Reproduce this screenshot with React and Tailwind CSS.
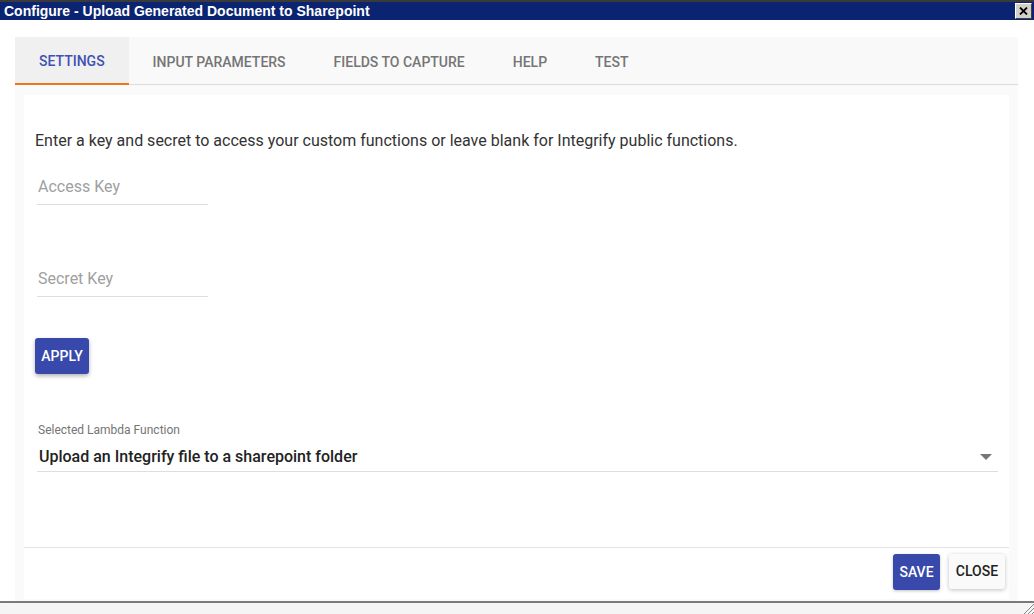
import React from 'react'

const tabs = ['SETTINGS', 'INPUT PARAMETERS', 'FIELDS TO CAPTURE', 'HELP', 'TEST']

const App = () => {
    return (
        <div className="flex flex-col h-[614px] w-[1034px] bg-white overflow-hidden" style={{ fontFamily: 'Roboto, "Liberation Sans", sans-serif' }}>
            {/* title bar */}
            <div className="flex items-center justify-between h-[22px] border-t-2 border-[#3a3a3a] bg-[#0a2472] pl-[4px] pr-[2px]">
                <span className="text-[14px] font-bold text-white leading-none" style={{ fontFamily: '"Liberation Sans", Arial, sans-serif' }}>
                    Configure - Upload Generated Document to Sharepoint
                </span>
                <div className="flex items-center justify-center h-[16px] w-[17px] bg-[#d4d0c8] border border-t-white border-l-white border-r-[#404040] border-b-[#404040]">
                    <svg width="9" height="8" viewBox="0 0 9 8">
                        <path d="M1 0.5 L8 7.5 M8 0.5 L1 7.5" stroke="#000" strokeWidth="1.8" />
                    </svg>
                </div>
            </div>

            <div className="flex-1 flex flex-col pt-[17px] px-[15px] pr-[16px]">
                {/* tabs */}
                <div className="flex h-[48px] bg-[#f9f9f9] border-b border-[#dcdcdc]">
                    {tabs.map((t, i) => (
                        <div
                            key={t}
                            className={
                                i === 0
                                    ? 'flex items-center pt-[3px] px-[24px] text-[14px] font-medium text-[#3f51b5] bg-[#f0f0f0] border-b-2 border-[#e87722] -mb-px'
                                    : 'flex items-center pt-[3px] px-[24px] text-[14px] font-medium text-[#757575]'
                            }
                        >
                            {t}
                        </div>
                    ))}
                </div>

                {/* body */}
                <div className="flex-1 flex flex-col bg-[#fafafa] px-[9px] pt-[10px] pb-[2px]">
                    <div className="flex flex-col h-[453px] bg-white border-b border-[#e2e2e2] px-[11px] pt-[36px]">
                        <p className="text-[16px] text-[#333] leading-[20px]">
                            Enter a key and secret to access your custom functions or leave blank for Integrify public functions.
                        </p>

                        <div className="mt-[24px] ml-[2px] w-[171px] border-b border-[#dedede] pb-[5px]">
                            <span className="pl-[1px] text-[16px] text-[#a0a0a0] leading-[20px]">Access Key</span>
                        </div>

                        <div className="mt-[62px] ml-[2px] w-[171px] border-b border-[#dedede] pb-[5px]">
                            <span className="pl-[1px] text-[16px] text-[#a0a0a0] leading-[20px]">Secret Key</span>
                        </div>

                        <div className="mt-[41px]">
                            <button className="h-[36px] w-[54px] rounded-[3px] bg-[#3949ab] text-[14px] font-medium text-white shadow-[0_2px_4px_rgba(0,0,0,0.3)]">
                                APPLY
                            </button>
                        </div>

                        <div className="mt-[49px] ml-[3px] text-[12px] text-[#757575] leading-[14px]">
                            Selected Lambda Function
                        </div>
                        <div className="mt-[10px] ml-[2px] flex items-center justify-between border-b border-[#dedede] pb-[4px]">
                            <span className="pl-[2px] text-[16px] font-medium text-[#222] leading-[20px]">
                                Upload an Integrify file to a sharepoint folder
                            </span>
                            <svg width="12" height="6" viewBox="0 0 12 6" className="mr-[6px]">
                                <path d="M0 0 L12 0 L6 6 Z" fill="#777" />
                            </svg>
                        </div>
                    </div>

                    {/* footer */}
                    <div className="flex justify-end gap-[9px] bg-white pt-[6px] pr-[4px] h-[51px]">
                        <button className="h-[36px] w-[47px] rounded-[3px] bg-[#3949ab] text-[14px] font-medium text-white shadow-[0_1px_3px_rgba(0,0,0,0.25)]">
                            SAVE
                        </button>
                        <button className="h-[35px] w-[56px] rounded-[3px] bg-[#fafafa] text-[14px] font-medium text-[#222] shadow-[0_1px_4px_rgba(0,0,0,0.25)]">
                            CLOSE
                        </button>
                    </div>
                </div>
            </div>

            {/* status strip */}
            <div className="relative h-[14px] border-t-2 border-[#7a7a7a] bg-[#f5f5f5]">
                <svg width="12" height="12" viewBox="0 0 12 12" className="absolute right-0 bottom-0">
                    <path d="M12 2 L2 12 M12 6 L6 12 M12 10 L10 12" stroke="#888" strokeWidth="1" />
                </svg>
            </div>
        </div>
    )
}

export default App
